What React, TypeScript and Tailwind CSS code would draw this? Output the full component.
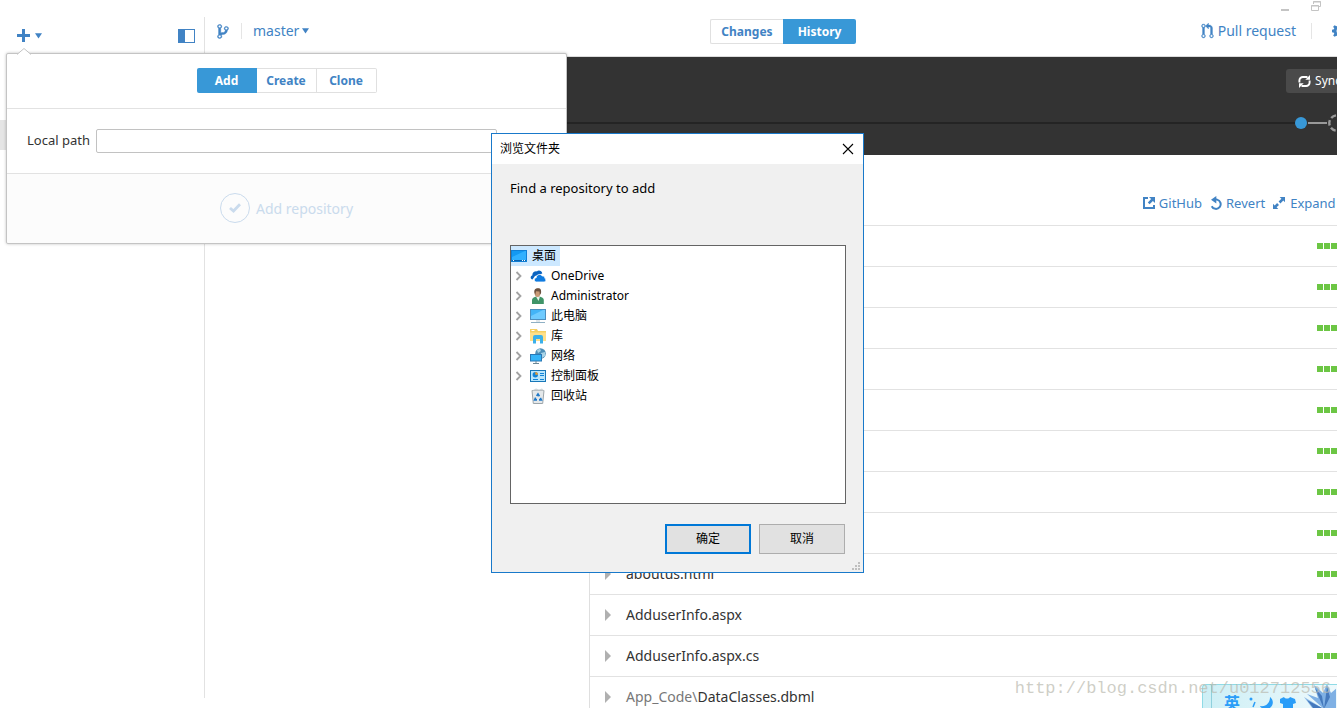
import React from "react";

const files = [
  { dir: "", name: "" },
  { dir: "", name: "" },
  { dir: "", name: "" },
  { dir: "", name: "" },
  { dir: "", name: "" },
  { dir: "", name: "" },
  { dir: "", name: "" },
  { dir: "", name: "" },
  { dir: "", name: "aboutus.html" },
  { dir: "", name: "AdduserInfo.aspx" },
  { dir: "", name: "AdduserInfo.aspx.cs" },
  { dir: "App_Code\\", name: "DataClasses.dbml" },
];

function Caret() {
  return (
    <svg className="h-[6px] w-[7px]" viewBox="0 0 7 6" fill="currentColor">
      <path d="M0 .3h7L3.500 5.600z" />
    </svg>
  );
}

function BranchIcon() {
  return (
    <svg
      className="h-[15px] w-[12px]"
      viewBox="-.4 .6 10.800 14.800"
      preserveAspectRatio="none"
      fill="currentColor"
      stroke="currentColor"
      strokeWidth=".4"
    >
      <path d="M10 5c0-1.110-.89-2-2-2a1.993 1.993 0 0 0-1 3.720v.3c-.02.52-.23.98-.63 1.380-.4.4-.86.61-1.380.63-.83.02-1.480.16-2 .45V4.720a1.993 1.993 0 0 0-1-3.720C.88 1 0 1.890 0 3a2 2 0 0 0 1 1.720v6.560c-.59.35-1 .99-1 1.720 0 1.110.89 2 2 2 1.110 0 2-.89 2-2 0-.53-.2-1-.53-1.360.09-.06.48-.41.59-.47.25-.11.56-.17.94-.17 1.050-.05 1.950-.45 2.750-1.250S8.950 7.770 9 6.730h-.02C9.590 6.370 10 5.730 10 5zM2 1.800c.66 0 1.200.55 1.200 1.200 0 .65-.55 1.200-1.200 1.200C1.350 4.200.8 3.650.8 3c0-.65.55-1.200 1.200-1.200zm0 12.410c-.66 0-1.200-.55-1.200-1.200 0-.65.55-1.200 1.200-1.200.65 0 1.200.55 1.200 1.200 0 .65-.55 1.200-1.200 1.200zm6-8c-.66 0-1.200-.55-1.200-1.200 0-.65.55-1.200 1.200-1.200.65 0 1.200.55 1.200 1.200 0 .65-.55 1.200-1.200 1.200z" />
    </svg>
  );
}

function PullRequestIcon() {
  return (
    <svg className="h-4 w-[13px]" viewBox="-.5 0 13 16" fill="currentColor" stroke="currentColor" strokeWidth=".3">
      <path d="M11 11.280V5c-.03-.78-.34-1.470-.94-2.060C9.460 2.350 8.780 2.030 8 2H7V0L4 3l3 3V4h1c.27.02.48.11.69.31.21.2.3.42.31.69v6.280A1.993 1.993 0 0 0 10 15a1.993 1.993 0 0 0 1-3.720zm-1 2.920c-.66 0-1.200-.55-1.200-1.200 0-.65.55-1.200 1.200-1.200.65 0 1.200.55 1.200 1.200 0 .65-.55 1.200-1.200 1.200zM4 3c0-1.110-.89-2-2-2a1.993 1.993 0 0 0-1 3.720v6.560A1.993 1.993 0 0 0 2 15a1.993 1.993 0 0 0 1-3.720V4.720c.59-.34 1-.98 1-1.720zm-.8 10c0 .66-.55 1.200-1.200 1.200-.65 0-1.200-.55-1.200-1.200 0-.65.55-1.200 1.200-1.200.65 0 1.200.55 1.200 1.200zM2 4.200C1.340 4.200.8 3.650.8 3c0-.65.55-1.200 1.200-1.200.65 0 1.200.55 1.200 1.200 0 .65-.55 1.200-1.200 1.200z" />
    </svg>
  );
}

function GearIcon() {
  return (
    <svg className="size-[14px]" viewBox="0 0 16 16" fill="currentColor">
      <path
        fillRule="evenodd"
        d="M6.500 0h3l.5 2.200 1 .4L13 1.500 14.700 3.200 13.400 5l.4 1.100L16 6.500v3l-2.200.5-.4 1 1.300 2-1.700 1.700-2-1.300-1 .4L9.500 16h-3L6 13.800l-1-.4-2 1.300L1.300 13l1.300-2-.4-1L0 9.500v-3L2.200 6l.4-1-1.300-2L3 1.300l2 1.300 1-.4zM8 5.200a2.800 2.800 0 1 0 0 5.600 2.800 2.800 0 0 0 0-5.600z"
      />
    </svg>
  );
}

function SyncIcon() {
  return (
    <svg className="size-[13px]" viewBox="0 0 13 13" fill="none" stroke="currentColor" strokeWidth="1.900">
      <path d="M1.400 7.500V5.500a3.500 3.500 0 0 1 3.500-3.500H9.500M11.600 5.500v2a3.500 3.500 0 0 1-3.500 3.500H3.500" />
      <path d="M12 0v4.700H7.300zM1 13V8.300h4.700z" fill="currentColor" stroke="none" />
    </svg>
  );
}

function GitHubLinkIcon() {
  return (
    <svg className="size-3" viewBox="0 0 12 12" fill="currentColor">
      <path d="M0 0h5v2H2v8h8V8h2v4H0zM6 0h6v6L9.900 3.900 6.600 7.200 4.800 5.400l3.300-3.300z" />
    </svg>
  );
}

function RevertIcon() {
  return (
    <svg className="h-[14px] w-[13px]" viewBox="0 0 13 14" fill="none" stroke="currentColor" strokeWidth="2">
      <path d="M4.500 3.600H7a4.700 4.700 0 1 1-5.300 6.600" />
      <path d="M6.300 0v7.400L1 3.700z" fill="currentColor" stroke="none" />
    </svg>
  );
}

function ExpandIcon() {
  return (
    <svg className="size-3" viewBox="0 0 12 12" fill="currentColor">
      <path d="M6.700 0H12v5.300L10.300 3.600 7.400 6.400 5.600 4.600l2.800-2.900zM5.300 12H0V6.700l1.700 1.700L4.100 6 6 7.900l-2.400 2.400z" />
    </svg>
  );
}

function Expander() {
  return (
    <svg className="h-[10px] w-[7px]" viewBox="0 0 7 10" fill="none" stroke="#a3a3a3" strokeWidth="1.800">
      <path d="M1.500 1l4 4-4 4" />
    </svg>
  );
}

function DesktopIcon() {
  return (
    <svg className="size-4" viewBox="0 0 16 16">
      <rect x=".5" y="2.500" width="15" height="11" fill="#1399f2" stroke="#0f7fd6" />
      <path d="M1 12V9l13-6h1v9z" fill="#2fb0ff" />
      <path d="M1 12.500h14" stroke="#0b62ad" />
      <path d="M2 12.500h1M11 12.500h1M13 12.500h1" stroke="#fff" />
    </svg>
  );
}

function OneDriveIcon() {
  return (
    <svg className="size-4" viewBox="0 0 16 16">
      <path d="M2.500 11.500C.4 11.300-.2 8.200 2.300 7.400 2.200 4.800 4.500 3 6.800 3.400 8.600 1.700 12 2.800 12.300 5.500L5 8z" fill="#0a63c0" />
      <path d="M6.500 14C3.700 13.800 3.600 10.100 6.200 9.700 6.300 6.500 10.600 5.200 12.200 8c2-.4 2.700 1 2.600 2.300 1.700.7 1.400 3.500-.6 3.700z" fill="#0f7be0" stroke="#fff" strokeWidth=".8" />
    </svg>
  );
}

function UserIcon() {
  return (
    <svg className="size-4" viewBox="0 0 16 16">
      <path d="M2 16v-4c0-2 2-3 4.500-3.500h2.500c3 .5 4.800 1.500 4.800 3.500v4z" fill="#3f9468" />
      <path d="M6 8.500h4L8.500 13z" fill="#e9f2ec" />
      <ellipse cx="7.500" cy="4.700" rx="2.900" ry="4.200" fill="#c99b77" />
      <path d="M4.400 4.500C3.700.8 6.500-.3 8.800.3c2.200.3 2.600 2.400 2.200 5L9.800 7 9.500 3.500 6 3.200 5.200 7z" fill="#6b5240" />
    </svg>
  );
}

function PcIcon() {
  return (
    <svg className="size-4" viewBox="0 0 16 16">
      <rect x=".5" y="1.500" width="15" height="10" fill="#43b4f7" stroke="#4d8fbf" />
      <path d="M1 11V8l12-6h2v9z" fill="#6fcbff" />
      <path d="M6 12h4v2H6z" fill="#dfe6ea" />
      <path d="M1 14.500h14" stroke="#8fb0c4" />
    </svg>
  );
}

function LibraryIcon() {
  return (
    <svg className="size-4" viewBox="0 0 16 16">
      <path d="M0 1h7l1 2h8v10H0z" fill="#f6cf62" />
      <path d="M0 4.500h16v8.500H0z" fill="#ffe08a" />
      <path d="M1.500 2.500h3" stroke="#fff" />
      <path d="M3 15.500V9a2 2 0 0 1 2-2h6a2 2 0 0 1 2 2v6.500h-3V11H6v4.500z" fill="#3bb0ea" />
    </svg>
  );
}

function NetworkIcon() {
  return (
    <svg className="size-4" viewBox="0 0 16 16">
      <circle cx="10.500" cy="5.500" r="5.300" fill="#4d8fb8" />
      <path d="M7 2l3-1.300 1 2.300-3 2zM11 5l4-1v4l-3 2z" fill="#a9d3e6" />
      <rect x=".5" y="6.500" width="11" height="6.500" fill="#35b4f8" stroke="#2b78b5" />
      <path d="M3 15.500h6M6 13v2" stroke="#6d8796" />
    </svg>
  );
}

function ControlPanelIcon() {
  return (
    <svg className="size-4" viewBox="0 0 16 16">
      <rect x=".5" y="2.500" width="15" height="11" fill="#b9e6fd" stroke="#1877b8" />
      <circle cx="5.300" cy="6.800" r="2.700" fill="#1284d8" />
      <path d="M5.300 6.800V4.100A2.700 2.700 0 0 1 8 6.800z" fill="#f19b2c" />
      <path d="M10 5.500h4M10 7.500h4M3 11.500h5M10 11.500h4" stroke="#1284d8" />
    </svg>
  );
}

function RecycleIcon() {
  return (
    <svg className="size-4" viewBox="0 0 16 16">
      <path d="M2 2.500h12L12.700 15.500H3.300z" fill="#e4e8ea" stroke="#9ca5aa" />
      <path d="M3 2l3-1.500 3 1L12 .6l2 2H2z" fill="#cfd5d8" />
      <path d="M6.700 8L8 6l1.400 2.200M10.300 9.800l1 2H9M7 11.800H4.700l1-2.100" fill="none" stroke="#1e78c8" strokeWidth="1.700" />
    </svg>
  );
}

const tree = [
  { label: "OneDrive", Icon: OneDriveIcon, open: true },
  { label: "Administrator", Icon: UserIcon, open: true },
  { label: "此电脑", Icon: PcIcon, open: true },
  { label: "库", Icon: LibraryIcon, open: true },
  { label: "网络", Icon: NetworkIcon, open: true },
  { label: "控制面板", Icon: ControlPanelIcon, open: true },
  { label: "回收站", Icon: RecycleIcon, open: false },
];

function TitleBarButtons() {
  return (
    <div className="flex h-[14px] justify-end gap-5 pr-[10px] text-[#c4c4c4]">
      <button aria-label="Minimize" className="flex h-3 w-[10px] items-end pb-px">
        <span className="h-[2px] w-2 bg-current" />
      </button>
      <button aria-label="Restore" className="h-3">
        <svg className="h-[10px] w-[10px]" viewBox="0 0 10 10" fill="none" stroke="currentColor">
          <path d="M2.500 3V.5h7v5H8M2 1h8" />
          <path d="M.5 4.500h7v5h-7zM0 5h8" />
        </svg>
      </button>
      <button aria-label="Close" className="h-3">
        <svg className="h-[10px] w-[10px]" viewBox="0 0 10 10" stroke="currentColor">
          <path d="M1 1l8 8M9 1l-8 8" />
        </svg>
      </button>
    </div>
  );
}

function Header() {
  return (
    <header className="flex h-[57px]">
      <div className="flex w-[205px] shrink-0 items-center justify-between pt-[14px] pr-[10px] pl-[17px] text-[#4183c4]">
        <button aria-label="Add a repository" className="flex items-center gap-[5px]">
          <svg className="size-[13px]" viewBox="0 0 13 13" fill="currentColor">
            <path d="M5 0h3v5h5v3H8v5H5V8H0V5h5z" />
          </svg>
          <Caret />
        </button>
        <button aria-label="Toggle sidebar" className="flex h-[14px] w-[17px] border border-current">
          <span className="h-full w-[6px] bg-current" />
        </button>
      </div>
      <div className="flex min-w-0 flex-1 flex-col border-b border-[#dcdcdc]">
        <TitleBarButtons />
        <div className="grid flex-1 grid-cols-[1fr_auto_1fr] items-center pb-2 text-[#4183c4]">
          <div className="flex items-center pl-3">
            <button aria-label="Branches">
              <BranchIcon />
            </button>
            <span className="mr-[11px] ml-3 h-4 w-px bg-[#e5e5e5]" />
            <button className="flex items-center gap-[3px] text-[14px] leading-5">
              master <Caret />
            </button>
          </div>
          <div className="flex h-[25px] text-[12px] leading-[23px] font-bold">
            <button className="w-[73px] rounded-l-[2px] border border-r-0 border-[#e0e0e0]">Changes</button>
            <button className="w-[73px] rounded-r-[2px] bg-[#3898d7] text-white">History</button>
          </div>
          <div className="flex items-center justify-end pr-[15px]">
            <button className="flex items-center gap-1 text-[14px] leading-5 whitespace-nowrap">
              <PullRequestIcon /> Pull request
            </button>
            <span className="mr-5 ml-[15px] h-4 w-px bg-[#e5e5e5]" />
            <button aria-label="Settings">
              <GearIcon />
            </button>
          </div>
        </div>
      </div>
    </header>
  );
}

function Timeline() {
  return (
    <section className="h-[98px] bg-[#333]">
      <div className="flex h-[57px] items-start justify-end pt-3 pr-2">
        <button className="flex h-6 items-center gap-1 rounded-[3px] bg-[#4a4a4a] px-3 text-[12px] text-white">
          <SyncIcon /> Sync
        </button>
      </div>
      <div className="flex h-[18px] items-center pr-[15px]">
        <span className="h-[2px] flex-1 bg-[#242424]" />
        <span className="size-3 rounded-full bg-[#3898d7]" />
        <span className="mx-px h-[2px] w-[19px] bg-[#999]" />
        <svg className="size-[18px]" viewBox="0 0 18 18" fill="none" stroke="#999" strokeWidth="2.400">
          <circle cx="9" cy="9" r="7.700" strokeDasharray="5.500 2.560" strokeDashoffset="2.700" />
        </svg>
      </div>
    </section>
  );
}

function DiffPane() {
  return (
    <section className="min-w-0 flex-1 border-l border-[#dfdfdf]">
      <div className="flex h-[71px] items-end justify-end gap-2 border-b border-[#e2e2e2] pr-2 pb-[12px] text-[13px] leading-5 text-[#4183c4]">
        <button className="flex items-center gap-1">
          <GitHubLinkIcon /> GitHub
        </button>
        <button className="flex items-center gap-[3px]">
          <RevertIcon /> Revert
        </button>
        <button className="flex items-center gap-[5px]">
          <ExpandIcon /> Expand all
        </button>
      </div>
      <ul>
        {files.map((f, i) => (
          <li key={i} className="flex h-[41px] items-center border-b border-[#e2e2e2] pr-[10px] pl-[15px]">
            <svg className="h-3 w-[6px]" viewBox="0 0 6 12" fill="#b0b0b0">
              <path d="M0 0l6 6-6 6z" />
            </svg>
            <span className="ml-[15px] flex-1 text-[14px] leading-5 text-[#333]">
              <span className="text-[#777]">{f.dir}</span>
              {f.name}
            </span>
            <span className="flex gap-px">
              {[0, 1, 2, 3, 4].map((n) => (
                <span key={n} className="size-[6px] bg-[#6cc644]" />
              ))}
            </span>
          </li>
        ))}
      </ul>
    </section>
  );
}

function AddPopover() {
  return (
    <div className="absolute top-[53px] left-[6px] w-[561px] rounded-[2px] border border-[#c4c4c4] bg-white shadow-[0_0_3px_rgba(0,0,0,0.25)]">
      <svg className="absolute -top-[6px] left-[10px] h-[7px] w-[14px]" viewBox="0 0 14 7" fill="#fff" stroke="#c4c4c4">
        <path d="M0 6.500L7 .5l7 6" />
        <path d="M1 6.900h12" stroke="#fff" />
      </svg>
      <div className="flex h-[55px] items-center justify-center border-b border-[#e2e2e2] pb-px text-[12px] leading-[23px] font-bold text-[#4183c4]">
        <button className="h-[25px] w-[60px] rounded-l-[2px] bg-[#3898d7] text-white">Add</button>
        <button className="h-[25px] w-[60px] border-y border-r border-[#e0e0e0]">Create</button>
        <button className="h-[25px] w-[60px] rounded-r-[2px] border-y border-r border-[#e0e0e0]">Clone</button>
      </div>
      <div className="flex h-[65px] items-center gap-[6px] border-b border-[#e2e2e2] pl-5 text-[13px] text-[#333]">
        <label htmlFor="local-path">Local path</label>
        <input id="local-path" className="h-6 w-[401px] rounded-[2px] border border-[#c2c2c2] px-1 outline-none" />
      </div>
      <div className="flex h-[69px] items-center justify-center rounded-b-[2px] bg-[#fcfcfc] pb-px">
        <button className="flex items-center gap-[6px] text-[14px] text-[#cadbed]">
          <span className="flex size-[30px] items-center justify-center rounded-full border border-current">
            <svg className="h-[10px] w-3" viewBox="0 0 12 10" fill="none" stroke="currentColor" strokeWidth="2.800">
              <path d="M1 5l3.500 3L11 1.300" />
            </svg>
          </span>
          Add repository
        </button>
      </div>
    </div>
  );
}

function BrowseDialog() {
  return (
    <div
      role="dialog"
      aria-label="浏览文件夹"
      className="absolute top-[133px] left-[491px] w-[373px] border border-[#1979ca] bg-[#f0f0f0] text-[12px] leading-5 text-black"
    >
      <div className="flex h-[30px] items-center justify-between bg-white pr-[9px] pb-px pl-2">
        <span>浏览文件夹</span>
        <button aria-label="关闭">
          <svg className="size-[12px]" viewBox="0 0 12 12" stroke="#000" strokeWidth="1.100">
            <path d="M1 1l10 10M11 1L1 11" />
          </svg>
        </button>
      </div>
      <div className="pt-[14px] pr-[17px] pb-[18px] pl-[18px]">
        <p className="h-[67px] text-[13px]">Find a repository to add</p>
        <ul className="h-[259px] border border-[#646464] bg-white">
          <li className="flex h-5 w-[49px] items-center gap-[5px] bg-[#cce8ff]">
            <DesktopIcon /> 桌面
          </li>
          {tree.map(({ label, Icon, open }) => (
            <li key={label} className="flex h-5 items-center pl-1">
              <span className="flex w-[15px]">{open && <Expander />}</span>
              <Icon />
              <span className="ml-[5px]">{label}</span>
            </li>
          ))}
        </ul>
        <div className="mt-5 flex justify-end gap-2 pr-px">
          <button className="h-[30px] w-[86px] border-2 border-[#0078d7] bg-[#e1e1e1]">确定</button>
          <button className="h-[30px] w-[86px] border border-[#adadad] bg-[#e1e1e1]">取消</button>
        </div>
      </div>
      <svg className="absolute right-[3px] bottom-[2px] size-2" viewBox="0 0 8 8" fill="#bfbfbf">
        <path d="M6 0h2v2H6zM3 3h2v2H3zM6 3h2v2H6zM0 6h2v2H0zM3 6h2v2H3zM6 6h2v2H6z" />
      </svg>
    </div>
  );
}

function ImeBar() {
  return (
    <div className="absolute right-0 bottom-0 flex h-6 w-[135px] items-center overflow-hidden rounded-tl-[4px] border-t border-l border-[#8fdbe6] bg-linear-to-r from-[#cdeff5] to-[#eef9fc] pl-2">
      <span className="h-full w-px bg-[#8fd0dd]" />
      <span className="ml-3 pt-3 text-[16px] leading-4 font-bold text-[#2a9df8]">英</span>
      <svg className="ml-2 h-6 w-[88px] shrink-0" viewBox="0 0 88 24" fill="#2a9df8">
        <circle cx="3" cy="14" r="1.500" />
        <path d="M7 17l-2 5" stroke="#2a9df8" strokeWidth="1.500" />
        <path d="M22 12c5 4 3 11-3 12-3 .3-6-.7-7-3 6 1 10-3 10-9z" />
        <path d="M32 14l4-2c1 2 5 2 6 0l5 2 1 4-3 1v6H35v-6l-3-1z" />
        <path d="M76 24L59 9l11 4L66 0l9 8 4-9 4 9 8-7v23z" fill="#7fb0e4" />
        <path d="M76 24L56 12l9 12z" fill="#8ab8e6" />
        <path d="M76 24L67 3l7 8zM76 24L79 2l3 10zM76 24L59 15l7 9z" fill="#4579bd" />
      </svg>
    </div>
  );
}

export default function App() {
  return (
    <div className="relative h-screen overflow-hidden bg-white font-['Noto_Sans','Noto_Sans_CJK_SC',sans-serif]">
      <div className="flex h-full w-[calc(100%+24px)] flex-col">
        <Header />
        <div className="flex min-h-0 flex-1">
          <aside className="-mt-10 mb-[10px] w-[205px] shrink-0 border-r border-[#e2e2e2]">
            <div className="mt-[103px] h-[30px] bg-[#e5e5e5]" />
          </aside>
          <main className="min-w-0 flex-1">
            <Timeline />
            <div className="flex">
              <section className="w-[384px] shrink-0" />
              <DiffPane />
            </div>
          </main>
        </div>
      </div>
      <ImeBar />
      <span className="absolute right-[6px] bottom-[7px] font-['Liberation_Mono',monospace] text-[17px] leading-6 text-[#b9b9ae]/70">
        http://blog.csdn.net/u012712556
      </span>
      <AddPopover />
      <BrowseDialog />
    </div>
  );
}
